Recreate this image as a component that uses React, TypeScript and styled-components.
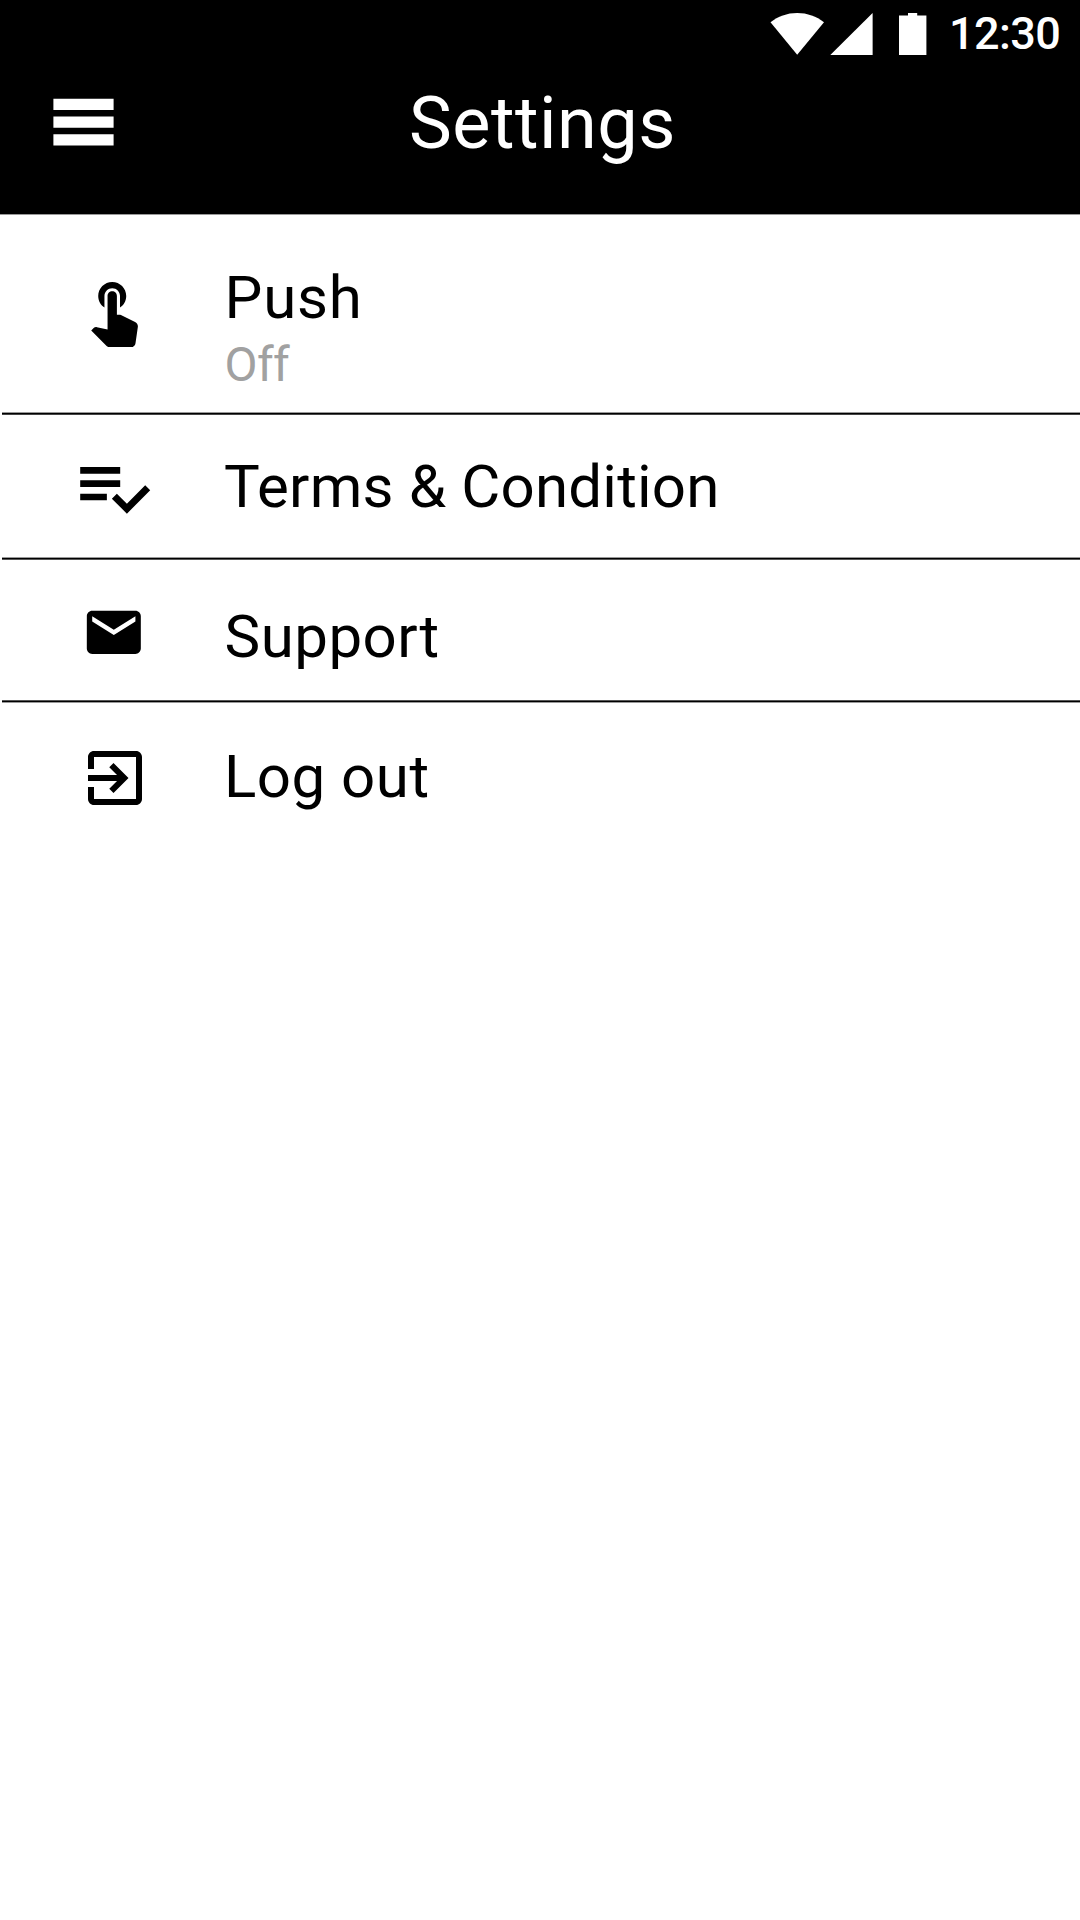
import React from 'react';
import styled, { createGlobalStyle } from 'styled-components';

const GlobalStyle = createGlobalStyle`
  * { box-sizing: border-box; }
  body {
    margin: 0;
    background: #fff;
    font-family: Roboto, "Noto Sans", sans-serif;
  }
`;

const Screen = styled.div`
  width: 1080px;
  height: 1920px;
  background: #fff;
  color: #000;
  overflow: hidden;
`;

const Header = styled.header`
  height: 215px;
  background: #000;
  color: #fff;
  border-bottom: 1px solid #999;
`;

const StatusBar = styled.div`
  display: flex;
  justify-content: flex-end;
  height: 66px;
  padding-right: 21px;
`;

const StatusIcons = styled.svg`
  display: block;
  width: 179px;
  height: 66px;
  fill: currentColor;
`;

const Clock = styled.time`
  width: 110px;
  font-size: 45px;
  font-weight: 500;
  line-height: 67px;
  letter-spacing: -0.6px;
  white-space: nowrap;
`;

const TitleBar = styled.div`
  display: grid;
  grid-template-columns: 409px 1fr;
  height: 120px;
`;

const MenuButton = styled.button`
  display: block;
  width: 120px;
  height: 120px;
  padding: 0;
  border: 0;
  background: none;
  color: inherit;
`;

const MenuIcon = styled.svg`
  display: block;
  width: 120px;
  height: 120px;
  fill: currentColor;
`;

const Title = styled.h1`
  margin: 14px 0 0;
  font-size: 72px;
  font-weight: 400;
  line-height: 88px;
  letter-spacing: 0.5px;
`;

const List = styled.ul`
  margin: 0;
  padding: 0;
  list-style: none;
`;

const Row = styled.li<{ $height: number }>`
  display: flex;
  height: ${(p) => p.$height}px;
`;

const Divider = styled.li<{ $top: string; $bottom: string }>`
  height: 3px;
  margin-left: 2px;
  border-top: 1px solid ${(p) => p.$top};
  border-bottom: 1px solid ${(p) => p.$bottom};
  background: #000;
`;

const IconCell = styled.div<{ $left: number; $top: number }>`
  flex: none;
  width: 224px;
  padding: ${(p) => p.$top}px 0 0 ${(p) => p.$left}px;
`;

const Icon = styled.svg<{ $size: number }>`
  display: block;
  width: ${(p) => p.$size}px;
  height: ${(p) => p.$size}px;
  fill: currentColor;
`;

const Labels = styled.div<{ $top: number; $inset: number }>`
  padding: ${(p) => p.$top}px 0 0 ${(p) => p.$inset}px;
  white-space: nowrap;
`;

const Label = styled.div<{ $spacing: number }>`
  font-size: 60px;
  line-height: 70px;
  letter-spacing: ${(p) => p.$spacing}px;
`;

const Status = styled.div`
  margin-top: 4px;
  color: #a1a1a1;
  font-size: 48px;
  line-height: 56px;
  letter-spacing: -0.6px;
`;

interface Item {
  label: string;
  status?: string;
  spacing: number;
  inset: number;
  height: number;
  textTop: number;
  icon: { path: string; viewBox: string; size: number; left: number; top: number };
  divider?: [string, string];
}

const items: Item[] = [
  {
    label: 'Push',
    status: 'Off',
    spacing: 0.8,
    inset: 0.5,
    height: 197,
    textTop: 48,
    divider: ['#999', '#444'],
    icon: {
      size: 75,
      left: 76,
      top: 57,
      viewBox: '-0.14 -0.2 24.1 24.1',
      path: 'M9 11.24V7.5C9 6.12 10.12 5 11.5 5S14 6.12 14 7.5v3.74c1.21-.81 2-2.18 2-3.74C16 5.01 13.99 3 11.5 3S7 5.01 7 7.5c0 1.56.79 2.93 2 3.74zm9.84 4.63l-4.54-2.26c-.17-.07-.35-.11-.54-.11H13v-6c0-.83-.67-1.5-1.5-1.5S10 6.67 10 7.5v10.74l-3.43-.72c-.08-.01-.15-.03-.24-.03-.31 0-.59.13-.79.33l-.79.8 4.94 4.94c.27.27.65.44 1.06.44h6.79c.75 0 1.33-.55 1.44-1.28l.75-5.27c.01-.07.02-.14.02-.2 0-.62-.38-1.16-.91-1.38z',
    },
  },
  {
    label: 'Terms & Condition',
    spacing: 0.2,
    inset: 0,
    height: 142,
    textTop: 37,
    divider: ['#999', '#555'],
    icon: {
      size: 80,
      left: 73,
      top: 32,
      viewBox: '-0.16 0 24 24',
      path: 'M14 10H2v2h12v-2zm0-4H2v2h12V6zM2 16h8v-2H2v2zm19.5-4.5L23 13l-6.99 7-4.51-4.5L13 14l3.01 3 5.49-5.5z',
    },
  },
  {
    label: 'Support',
    spacing: 0.5,
    inset: 0.5,
    height: 140,
    textTop: 42,
    divider: ['#555', '#999'],
    icon: {
      size: 65,
      left: 81,
      top: 40,
      viewBox: '-0.15 0 24.07 24.07',
      path: 'M20 4H4c-1.1 0-1.99.9-1.99 2L2 18c0 1.1.9 2 2 2h16c1.1 0 2-.9 2-2V6c0-1.1-.9-2-2-2zm0 4l-8 5-8-5V6l8 5 8-5v2z',
    },
  },
  {
    label: 'Log out',
    spacing: 0.5,
    inset: 0,
    height: 140,
    textTop: 39,
    icon: {
      size: 72,
      left: 79,
      top: 39,
      viewBox: '0 0 24 24',
      path: 'M10.09 15.59L11.5 17l5-5-5-5-1.41 1.41L12.67 11H3v2h9.67l-2.58 2.59zM19 3H5c-1.11 0-2 .9-2 2v4h2V5h14v14H5v-4H3v4c0 1.1.89 2 2 2h14c1.1 0 2-.9 2-2V5c0-1.1-.9-2-2-2z',
    },
  },
];

export default function App() {
  return (
    <>
      <GlobalStyle />
      <Screen>
        <Header>
          <StatusBar>
            <StatusIcons viewBox="770 0 179 66" aria-hidden="true">
              <path d="M797.2 54.8 770.5 22.2C778 16.4 787 13 797.2 13S816.5 16.4 824 22.2Z" />
              <path d="M830.3 55 872.6 13V55Z" />
              <path d="M899 55V15.4H908V13H917.2V15.4H926.4V55Z" />
            </StatusIcons>
            <Clock>12:30</Clock>
          </StatusBar>
          <TitleBar>
            <MenuButton aria-label="Menu">
              <MenuIcon viewBox="0 66 120 120">
                <path d="M53.4 98.8H113.6V110H53.4ZM53.4 116.5H113.6V127.7H53.4ZM53.4 134.2H113.6V145.4H53.4Z" />
              </MenuIcon>
            </MenuButton>
            <Title>Settings</Title>
          </TitleBar>
        </Header>
        <List>
          {items.map((item) => (
            <React.Fragment key={item.label}>
              <Row $height={item.height}>
                <IconCell $left={item.icon.left} $top={item.icon.top}>
                  <Icon $size={item.icon.size} viewBox={item.icon.viewBox} aria-hidden="true">
                    <path d={item.icon.path} />
                  </Icon>
                </IconCell>
                <Labels $top={item.textTop} $inset={item.inset}>
                  <Label $spacing={item.spacing}>{item.label}</Label>
                  {item.status && <Status>{item.status}</Status>}
                </Labels>
              </Row>
              {item.divider && <Divider $top={item.divider[0]} $bottom={item.divider[1]} />}
            </React.Fragment>
          ))}
        </List>
      </Screen>
    </>
  );
}
